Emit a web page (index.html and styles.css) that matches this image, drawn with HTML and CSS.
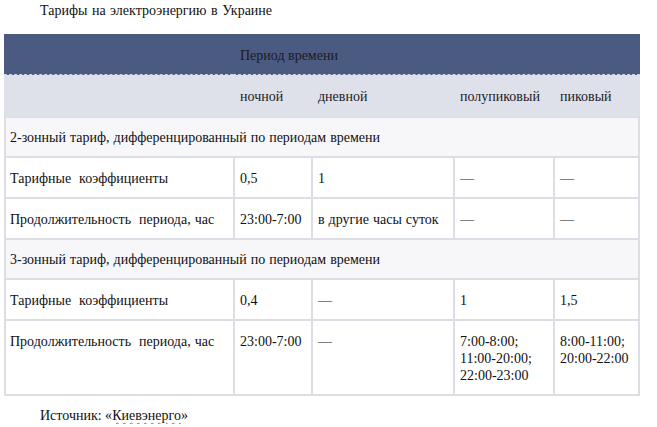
FILE: index.html
```html
<!DOCTYPE html>
<html lang="ru">
<head>
<meta charset="utf-8">
<title>Тарифы на электроэнергию в Украине</title>
<link rel="stylesheet" href="styles.css">
</head>
<body>
<p class="caption">Тарифы на электроэнергию в Украине</p>
<table class="tariffs">
  <colgroup>
    <col class="c1"><col class="c2"><col class="c3"><col class="c4"><col class="c5">
  </colgroup>
  <thead>
    <tr class="head-dark">
      <th></th>
      <th colspan="4">Период времени</th>
    </tr>
    <tr class="head-light">
      <th></th>
      <th>ночной</th>
      <th>дневной</th>
      <th>полупиковый</th>
      <th>пиковый</th>
    </tr>
  </thead>
  <tbody>
    <tr class="group">
      <td colspan="5">2-зонный тариф, дифференцированный по периодам времени</td>
    </tr>
    <tr>
      <td>Тарифные&nbsp; коэффициенты</td>
      <td>0,5</td>
      <td>1</td>
      <td>—</td>
      <td>—</td>
    </tr>
    <tr>
      <td>Продолжительность&nbsp; периода, час</td>
      <td>23:00-7:00</td>
      <td>в другие часы суток</td>
      <td>—</td>
      <td>—</td>
    </tr>
    <tr class="group">
      <td colspan="5">3-зонный тариф, дифференцированный по периодам времени</td>
    </tr>
    <tr>
      <td>Тарифные&nbsp; коэффициенты</td>
      <td>0,4</td>
      <td>—</td>
      <td>1</td>
      <td>1,5</td>
    </tr>
    <tr>
      <td>Продолжительность&nbsp; периода, час</td>
      <td>23:00-7:00</td>
      <td>—</td>
      <td>7:00-8:00;<br>11:00-20:00;<br>22:00-23:00</td>
      <td>8:00-11:00;<br>20:00-22:00</td>
    </tr>
  </tbody>
</table>
<p class="source">Источник: «<span class="spell">Киевэнерго</span>»</p>
</body>
</html>
```

FILE: styles.css
```css
html, body {
  margin: 0;
  padding: 0;
  background: #ffffff;
}

body {
  font-family: "Liberation Serif", "Times New Roman", serif;
  font-size: 14px;
  line-height: 17px;
  color: #111111;
  padding: 2px 0 0 4px;
}

.caption {
  margin: 0 0 15px 36px;
  word-spacing: 1px;
}

.tariffs {
  width: 636px;
  table-layout: fixed;
  border-collapse: separate;
  border-spacing: 0;
  font: inherit;
}

.c1 { width: 229px; }
.c2 { width: 78px; }
.c3 { width: 142px; }
.c4 { width: 100px; }
.c5 { width: 87px; }

.tariffs th {
  font-weight: normal;
  text-align: left;
  padding: 0 5px 0 7px;
  color: #1a1c26;
}

.head-dark th {
  background: #4b5a80;
  height: 38px;
  padding-top: 2px;
  border-bottom: 1px dashed #c9d3e6;
}

.head-light th {
  background: #dfe1ea;
  height: 41px;
  padding-top: 1px;
}

.tariffs td {
  vertical-align: top;
  padding: 12px 5px 10px 5px;
  background: #ffffff;
  border-left: 2px solid #dcdde5;
  border-bottom: 2px solid #dcdde5;
  word-spacing: 0.5px;
}

.tariffs td:last-child {
  border-right: 2px solid #dcdde5;
}

.tariffs td:first-child {
  padding-left: 4px;
}

.tariffs tbody tr:first-child td {
  border-top: 1px solid #dcdde5;
}

.tariffs .group td {
  background: #f7f7f9;
  padding-top: 11px;
  padding-bottom: 10px;
}

.source {
  margin: 11px 0 0 36px;
}

.spell {
  text-decoration: underline wavy #e05050;
  text-decoration-thickness: 1px;
  text-underline-offset: 2px;
}
```
